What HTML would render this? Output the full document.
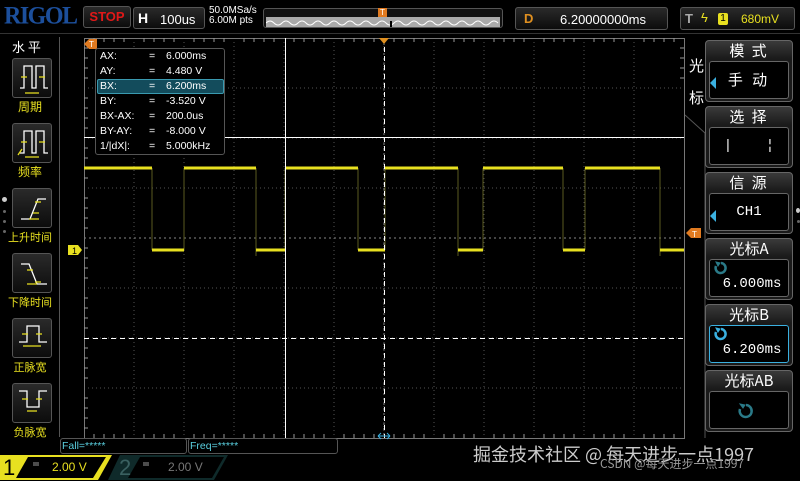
<!DOCTYPE html>
<html><head><meta charset="utf-8"><style>
*{margin:0;padding:0;box-sizing:border-box}
body{width:800px;height:480px;background:#000;overflow:hidden;position:relative;font-family:"Liberation Sans","Noto Sans CJK SC",sans-serif;color:#fff}
.a{position:absolute}
.box{position:absolute;border:1px solid #555;border-radius:3px;background:linear-gradient(#2a2a2a,#0c0c0c)}
.lbl{position:absolute;color:#e8e020;font-size:11px;text-align:center;width:58px;left:1px}
.mh{position:absolute;left:705px;width:88px;height:62px;border:1px solid #666;border-radius:4px;background:linear-gradient(#3a3a3a,#1a1a1a 30%,#1a1a1a)}
.mh .t{text-align:center;font-size:15px;line-height:19px;color:#fff;font-family:"Noto Sans CJK SC",sans-serif;letter-spacing:2px}
.mh .in{position:absolute;left:3px;top:20px;width:80px;height:38px;border:1px solid #666;border-radius:3px;background:#000;font-family:"Liberation Mono",monospace;font-size:14px;text-align:center}
</style></head><body>
<!-- top bar -->
<div class="a" style="left:4px;top:3px;font-family:'Liberation Serif',serif;font-weight:bold;font-size:24px;color:#1c4f9c;letter-spacing:-1.5px;transform:scaleY(1.05)">RIGOL</div>
<div class="box" style="left:83px;top:6px;width:48px;height:22px;color:#e01818;font-weight:bold;font-size:13px;text-align:center;line-height:20px">STOP</div>
<div class="box" style="left:133px;top:7px;width:72px;height:22px"><span class="a" style="left:4px;top:2px;font-weight:bold;font-size:14px">H</span><span class="a" style="left:26px;top:4px;font-size:13px">100us</span></div>
<div class="a" style="left:209px;top:6px;font-size:10px;line-height:10px">50.0MSa/s<br>6.00M pts</div>
<div class="box" style="left:263px;top:8px;width:240px;height:20px;background:#111"></div>
<div class="a" style="left:266px;top:17px;width:234px;height:10px;background:#aaa"></div>
<svg class="a" style="left:266px;top:17px" width="234" height="10"><path d="M0 6 Q4 2 8 6 T16 6 T24 6 T32 6 T40 6 T48 6 T56 6 T64 6 T72 6 T80 6 T88 6 T96 6 T104 6 T112 6 T120 6 T128 6 T136 6 T144 6 T152 6 T160 6 T168 6 T176 6 T184 6 T192 6 T200 6 T208 6 T216 6 T224 6 T232 6" stroke="#fff" fill="none"/><rect x="124" y="4" width="2" height="6" fill="#000"/></svg>
<div class="a" style="left:378px;top:8px;width:9px;height:9px;background:#e07a20;font-size:8px;color:#fff;text-align:center;line-height:9px">T</div>
<div class="box" style="left:515px;top:7px;width:153px;height:23px"><span class="a" style="left:8px;top:3px;color:#e09020;font-weight:bold;font-size:13px">D</span><span class="a" style="left:44px;top:4px;font-size:13px">6.20000000ms</span></div>
<div class="box" style="left:680px;top:7px;width:115px;height:23px"><span class="a" style="left:4px;top:3px;color:#aaa;font-weight:bold;font-size:13px">T</span><span class="a" style="left:20px;top:2px;color:#e8e020;font-size:13px">ϟ</span><span class="a" style="left:37px;top:5px;width:10px;height:12px;background:#e8e020;border-radius:2px;color:#000;font-size:10px;text-align:center;line-height:12px">1</span><span class="a" style="left:60px;top:4px;color:#e8e020;font-size:12px">680mV</span></div>
<div class="a" style="left:0;top:33px;width:800px;height:1px;background:#333"></div>
<!-- left panel -->
<div class="a" style="left:59px;top:37px;width:1px;height:400px;background:#555"></div>
<div class="a" style="left:12px;top:37px;font-size:13px;font-family:'Noto Sans CJK SC',sans-serif">水 平</div>
<div class="box" style="left:12px;top:58px;width:40px;height:40px"></div>
<div class="box" style="left:12px;top:123px;width:40px;height:40px"></div>
<div class="box" style="left:12px;top:188px;width:40px;height:40px"></div>
<div class="box" style="left:12px;top:253px;width:40px;height:40px"></div>
<div class="box" style="left:12px;top:318px;width:40px;height:40px"></div>
<div class="box" style="left:12px;top:383px;width:40px;height:40px"></div>
<svg class="a" style="left:0;top:0" width="60" height="440" fill="none" stroke-width="1.3">
<path d="M20 88h4V66h8v22h4V66h8v22h4" stroke="#fff"/><path d="M21 77h6M39 77h6M25 93h14" stroke="#e8e020"/>
<path d="M20 153h4V131h8v22h4V131h8v22h4" stroke="#fff"/><path d="M21 142h6M39 142h6M25 157h14M18 155l4-6" stroke="#e8e020"/>
<path d="M21 219h9l8-20h8" stroke="#fff"/><path d="M33 213h6M35 202h6M29 219h10" stroke="#e8e020"/>
<path d="M21 264h8l8 20h10" stroke="#fff"/><path d="M27 270h6M35 282h6M27 284h10" stroke="#e8e020"/>
<path d="M19 342h8V326h12v16h8" stroke="#fff"/><path d="M22 334h6M36 334h6M23 346h18" stroke="#e8e020"/>
<path d="M19 391h8v16h12V391h8" stroke="#fff"/><path d="M22 399h6M36 399h6M27 411h10" stroke="#e8e020"/>
</svg>
<div class="lbl" style="top:98px;font-size:12px">周期</div>
<div class="lbl" style="top:163px;font-size:12px">频率</div>
<div class="lbl" style="top:229px">上升时间</div>
<div class="lbl" style="top:294px">下降时间</div>
<div class="lbl" style="top:359px">正脉宽</div>
<div class="lbl" style="top:424px">负脉宽</div>
<div class="a" style="left:2px;top:197px;width:5px;height:5px;border-radius:50%;background:#ccc"></div>
<div class="a" style="left:3px;top:210px;width:3px;height:3px;border-radius:50%;background:#666"></div>
<div class="a" style="left:3px;top:220px;width:3px;height:3px;border-radius:50%;background:#666"></div>
<div class="a" style="left:3px;top:230px;width:3px;height:3px;border-radius:50%;background:#666"></div>
<!-- plot -->
<svg class="a" style="left:0;top:0" width="800" height="480">
<g stroke="#555" stroke-width="1" stroke-dasharray="1 3">
<path d="M134 38V438M184 38V438M234 38V438M334 38V438M434 38V438M484 38V438M534 38V438M584 38V438M634 38V438M284 38V438M384 38V438"/>
<path d="M84 88H684M84 138H684M84 188H684M84 288H684M84 338H684M84 388H684"/>
</g>
<path d="M84 238H684M384 38V438" stroke="#888" stroke-dasharray="2 3"/>
<rect x="84.5" y="38.5" width="600" height="400" stroke="#777" fill="none"/>
<g stroke="#999"><path d="M84 48h4M84 58h4M84 68h4M84 78h4M84 98h4M84 108h4M84 118h4M84 128h4M84 148h4M84 158h4M84 168h4M84 178h4M84 198h4M84 208h4M84 218h4M84 228h4M84 248h4M84 258h4M84 268h4M84 278h4M84 298h4M84 308h4M84 318h4M84 328h4M84 348h4M84 358h4M84 368h4M84 378h4M84 398h4M84 408h4M84 418h4M84 428h4"/>
<path d="M94 438v-4M104 438v-4M114 438v-4M124 438v-4M144 438v-4M154 438v-4M164 438v-4M174 438v-4M194 438v-4M204 438v-4M214 438v-4M224 438v-4M244 438v-4M254 438v-4M264 438v-4M274 438v-4M294 438v-4M304 438v-4M314 438v-4M324 438v-4M344 438v-4M354 438v-4M364 438v-4M374 438v-4M394 438v-4M404 438v-4M414 438v-4M424 438v-4M444 438v-4M454 438v-4M464 438v-4M474 438v-4M494 438v-4M504 438v-4M514 438v-4M524 438v-4M544 438v-4M554 438v-4M564 438v-4M574 438v-4M594 438v-4M604 438v-4M614 438v-4M624 438v-4M644 438v-4M654 438v-4M664 438v-4M674 438v-4"/>
<path d="M94 38v4M104 38v4M114 38v4M124 38v4M144 38v4M154 38v4M164 38v4M174 38v4M194 38v4M204 38v4M214 38v4M224 38v4M244 38v4M254 38v4M264 38v4M274 38v4M294 38v4M304 38v4M314 38v4M324 38v4M344 38v4M354 38v4M364 38v4M374 38v4M394 38v4M404 38v4M414 38v4M424 38v4M444 38v4M454 38v4M464 38v4M474 38v4M494 38v4M504 38v4M514 38v4M524 38v4M544 38v4M554 38v4M564 38v4M574 38v4M594 38v4M604 38v4M614 38v4M624 38v4M644 38v4M654 38v4M664 38v4M674 38v4M684 48h-4M684 58h-4M684 68h-4M684 78h-4"/></g>
<!-- waveform -->
<path d="M152 168v82M184 168v82M256 168v88M285 168v82M358 168v82M385 168v82M458 168v88M483 168v82M563 168v82M585 168v82M660 168v88" stroke="#5a5a20"/>
<g stroke="#e8e020" stroke-width="3"><path d="M84 168h68M184 168h72M285 168h73M385 168h73M483 168h80M585 168h75M152 250h32M256 250h29M358 250h27M458 250h25M563 250h22M660 250h24"/></g>
<!-- cursors -->
<path d="M84 137.5H684M285.5 38V438" stroke="#fff"/>
<path d="M84 338.5H684M384.5 38V438" stroke="#fff" stroke-dasharray="5 4"/>
<path d="M378 436h12M378 436l3-3M378 436l3 3M390 436l-3-3M390 436l-3 3" stroke="#3ab0e0"/>
<path d="M379 38h10l-5 6z" fill="#e09020"/>
<path d="M84 44l5-5h8v10h-8z" fill="#e07a20"/>
<path d="M686 233l5-5h10v10h-10z" fill="#e07a20"/>
<path d="M68 245h10l4 5-4 5h-10z" fill="#e8e020"/>
<text x="72" y="254" font-size="9" fill="#000" font-family="Liberation Sans">1</text>
<text x="89" y="47" font-size="8" fill="#fff" font-family="Liberation Sans">T</text>
<text x="692" y="237" font-size="8" fill="#fff" font-family="Liberation Sans">T</text>
<path d="M685 115l20 18v305" stroke="#555" fill="none"/>
</svg>
<!-- measurement box -->
<div class="a" style="left:95px;top:48px;width:130px;height:107px;background:#000;border:1px solid #555;border-radius:3px;font-size:10.5px;line-height:15px;padding-left:4px">
<div style="position:relative"><span>AX:</span><span class="a" style="left:49px">=</span><span class="a" style="left:66px">6.000ms</span></div>
<div style="position:relative"><span>AY:</span><span class="a" style="left:49px">=</span><span class="a" style="left:66px">4.480 V</span></div>
<div style="position:relative;background:#134c5c;border:1px solid #3a9ab0;border-radius:2px;margin-left:-3px;padding-left:2px;height:15px;line-height:13px;width:127px"><span>BX:</span><span class="a" style="left:51px">=</span><span class="a" style="left:68px">6.200ms</span></div>
<div style="position:relative"><span>BY:</span><span class="a" style="left:49px">=</span><span class="a" style="left:66px">-3.520 V</span></div>
<div style="position:relative"><span>BX-AX:</span><span class="a" style="left:49px">=</span><span class="a" style="left:66px">200.0us</span></div>
<div style="position:relative"><span>BY-AY:</span><span class="a" style="left:49px">=</span><span class="a" style="left:66px">-8.000 V</span></div>
<div style="position:relative"><span>1/|dX|:</span><span class="a" style="left:49px">=</span><span class="a" style="left:66px">5.000kHz</span></div>
</div>
<!-- right menu -->
<div class="a" style="left:689px;top:50px;font-size:15px;line-height:32px;width:16px;font-family:'Noto Sans CJK SC',sans-serif">光<br>标</div>
<div class="mh" style="top:40px"><div class="t">模 式</div><div class="in" style="font-family:'Noto Sans CJK SC',sans-serif;line-height:36px;font-size:15px;letter-spacing:3px">手 动</div></div>
<div class="a" style="left:710px;top:77px;width:0;height:0;border-top:6px solid transparent;border-bottom:6px solid transparent;border-right:6px solid #3ab0e0"></div>
<div class="mh" style="top:106px"><div class="t">选 择</div><div class="in" style="line-height:36px">|&nbsp;&nbsp;&nbsp;&nbsp;¦</div></div>
<div class="mh" style="top:172px"><div class="t">信 源</div><div class="in" style="line-height:36px">CH1</div></div>
<div class="a" style="left:710px;top:210px;width:0;height:0;border-top:6px solid transparent;border-bottom:6px solid transparent;border-right:6px solid #3ab0e0"></div>
<div class="mh" style="top:238px"><div class="t" style="letter-spacing:0">光标A</div><div class="in" style="line-height:48px;padding-left:6px">6.000ms</div></div>
<div class="mh" style="top:304px"><div class="t" style="letter-spacing:0">光标B</div><div class="in" style="line-height:48px;padding-left:6px;border-color:#3ab0e0">6.200ms</div></div>
<div class="mh" style="top:370px"><div class="t" style="letter-spacing:0">光标AB</div><div class="in"></div></div>
<svg class="a" style="left:0;top:0" width="800" height="480" fill="none" stroke-width="2.5">
<path d="M716 266a5 5 0 1 0 5 -3" stroke="#2a7a88"/><path d="M716 262l4 1-2 3z" fill="#2a7a88" stroke="#2a7a88" stroke-width="1"/>
<path d="M716 332a5 5 0 1 0 5 -3" stroke="#3ab0e0"/><path d="M716 328l4 1-2 3z" fill="#3ab0e0" stroke="#3ab0e0" stroke-width="1"/>
<path d="M740 409a6 6 0 1 0 6 -4" stroke="#2a7a88"/><path d="M740 404l5 1-2 3z" fill="#2a7a88" stroke="#2a7a88" stroke-width="1"/>
</svg>
<div class="a" style="left:796px;top:208px;width:4px;height:5px;border-radius:50%;background:#ccc"></div>
<div class="a" style="left:797px;top:220px;width:3px;height:3px;border-radius:50%;background:#666"></div>
<!-- bottom -->
<div class="a" style="left:60px;top:438px;width:127px;height:16px;border:1px solid #555;border-radius:3px;color:#5ad0e0;font-size:10.5px;line-height:14px;padding-left:1px">Fall=*****</div>
<div class="a" style="left:188px;top:438px;width:150px;height:16px;border:1px solid #555;border-radius:3px;color:#5ad0e0;font-size:10.5px;line-height:14px;padding-left:1px">Freq=*****</div>
<svg class="a" style="left:0;top:455px" width="240" height="25"><path d="M0 0H112L98 25H0z" fill="#e8e020"/><path d="M28 2H106L93 23H16z" fill="#000"/><path d="M120 0H228L214 25H108z" fill="#0f2a2a"/><path d="M140 2H224L212 23H128z" fill="#000"/><path d="M33 8h6M33 10h6M143 8h6M143 10h6" stroke="#ccc" stroke-width="0.8"/></svg>
<div class="a" style="left:3px;top:455px;font-size:22px;color:#000">1</div>
<div class="a" style="left:52px;top:460px;font-size:12px;color:#e8e020">2.00 V</div>
<div class="a" style="left:119px;top:455px;font-size:22px;color:#3a6060">2</div>
<div class="a" style="left:168px;top:460px;font-size:12px;color:#777">2.00 V</div>
<div class="a" style="left:473px;top:441px;font-size:18px;color:#ccc;font-family:'Noto Sans CJK SC',sans-serif;white-space:nowrap">掘金技术社区 @ 每天进步一点1997</div>
<div class="a" style="left:600px;top:455px;font-size:12px;color:#999;font-family:'Noto Sans CJK SC',sans-serif;white-space:nowrap">CSDN @每天进步一点1997</div>
</body></html>
